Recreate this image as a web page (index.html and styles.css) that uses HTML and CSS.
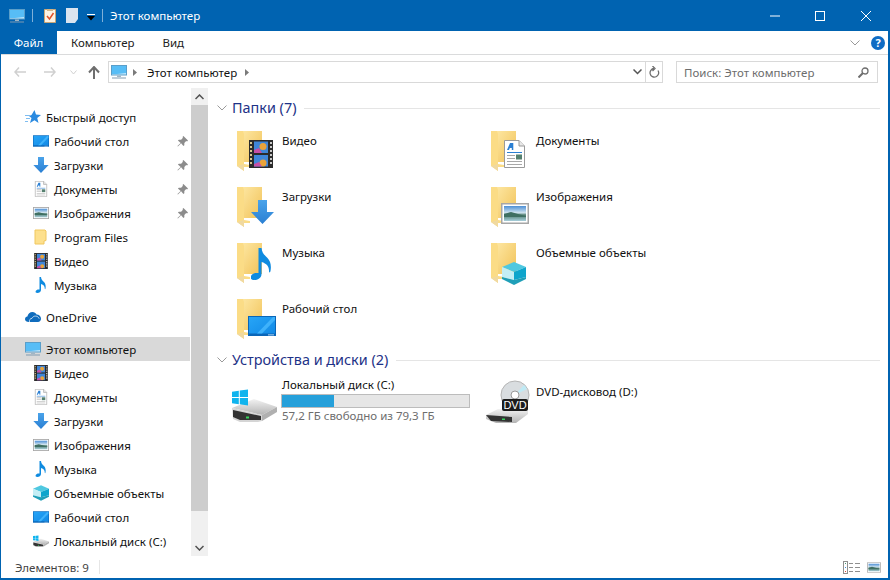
FILE: index.html
```html
<!DOCTYPE html>
<html lang="en">

<head>
  <meta charset="UTF-8">
  <title>Этот компьютер</title>
  <link rel="stylesheet" href="styles.css">
</head>

<body>
  <!-- Shared icons -->
  <svg class="defs" width="0" height="0">
    <defs>
      <linearGradient id="g-folder" x1="0" y1="0" x2="1" y2="1">
        <stop offset="0" stop-color="#fde6a0" />
        <stop offset="1" stop-color="#f1c258" />
      </linearGradient>
      <linearGradient id="g-screen" x1="0" y1="0" x2="1" y2="1">
        <stop offset="0" stop-color="#27a5f7" />
        <stop offset="1" stop-color="#128ae6" />
      </linearGradient>
      <linearGradient id="g-arrow" x1="0" y1="0" x2="0" y2="1">
        <stop offset="0" stop-color="#4aa3ea" />
        <stop offset="1" stop-color="#2a7fd3" />
      </linearGradient>
      <linearGradient id="g-photo" x1="0" y1="0" x2="0" y2="1">
        <stop offset="0" stop-color="#4d8fd6" />
        <stop offset="0.45" stop-color="#cfe3ee" />
        <stop offset="0.6" stop-color="#4f7d6e" />
        <stop offset="1" stop-color="#a8cfdc" />
      </linearGradient>
      <linearGradient id="g-disk" x1="0" y1="0" x2="0" y2="1">
        <stop offset="0" stop-color="#f2f2f2" />
        <stop offset="1" stop-color="#b4b4b4" />
      </linearGradient>

      <symbol id="folder" viewBox="0 0 48 48">
        <path d="M13 5h19v31H13z" fill="url(#g-folder)" />
        <path d="M7 5h6l1 3v30l6 1v2H14v4L7 40z" fill="#fbdc86" />
        <path d="M7 40l7 5v-7z" fill="#f0d9a0" />
      </symbol>

      <symbol id="computer" viewBox="0 0 16 14">
        <rect x="0.5" y="0.5" width="15" height="9.5" fill="#bfe6fb" stroke="#5a9ec9" />
        <path d="M1 1h14v7L6 9H1z" fill="#57bdf6" />
        <path d="M6 10.5h4v1.5H6z" fill="#9fb6c6" />
        <path d="M1 12.5h14v1H1z" fill="#7f9bb0" />
      </symbol>

      <symbol id="desktop" viewBox="0 0 28 20">
        <rect width="28" height="20" fill="#0a66b8" />
        <rect x="1" y="1" width="26" height="16.500" fill="url(#g-screen)" />
        <path d="M9 17.500L25 1h2v3L14 17.500z" fill="#3fb2fb" />
        <path d="M20 18.500h6v0.800h-6z" fill="#d6efff" />
      </symbol>

      <symbol id="arrow" viewBox="0 0 23 24">
        <path d="M7 0h9v12h7L11.500 24 0 12h7z" fill="url(#g-arrow)" />
      </symbol>

      <symbol id="doc" viewBox="0 0 21 28">
        <path d="M0.500 0.500H15L20.500 6v21.500H0.500z" fill="#fff" stroke="#9a9a9a" />
        <path d="M15 0.500V6h5.500" fill="#e8e8e8" stroke="#9a9a9a" />
        <path d="M6 3l-3 7h2l.8-2h2v2h1.500V3z" fill="#2a7fd3" />
        <path d="M3 12h15v1H3z" fill="#2a7fd3" />
        <path d="M3 15h8v1H3zM3 18h8v1H3zM3 21h15v1H3zM3 24h15v1H3z" fill="#a8a8a8" />
        <rect x="12" y="14.500" width="6" height="5" fill="#55806f" />
      </symbol>

      <symbol id="picture" viewBox="0 0 28 21">
        <rect width="28" height="21" fill="#a6a6a6" />
        <rect x="1.500" y="1.500" width="25" height="18" fill="#fff" />
        <rect x="3" y="3" width="22" height="15" fill="url(#g-photo)" />
        <path d="M3 11l7-2 7 2 8 2v1H3z" fill="#3f6f62" />
      </symbol>

      <symbol id="film" viewBox="0 0 24 28">
        <rect width="24" height="28" fill="#2b2b2b" />
        <path d="M1 2h2v2H1zM1 6h2v2H1zM1 10h2v2H1zM1 14h2v2H1zM1 18h2v2H1zM1 22h2v2H1z" fill="#d8c890" />
        <path d="M21 2h2v2h-2zM21 6h2v2h-2zM21 10h2v2h-2zM21 14h2v2h-2zM21 18h2v2h-2zM21 22h2v2h-2z" fill="#c9c9c9" />
        <rect x="5" y="1.500" width="14" height="11.500" fill="#3f86d8" />
        <rect x="5" y="15" width="14" height="11.500" fill="#3f86d8" />
        <circle cx="14" cy="6.500" r="3.500" fill="#e9a33a" />
        <circle cx="14" cy="23" r="3.500" fill="#e9a33a" />
        <path d="M5 10l5-2 3 5H5zM5 24l5-2 3 4.500H5z" fill="#c64fa5" />
      </symbol>

      <symbol id="music" viewBox="0 0 21 32">
        <path d="M7.500 0h3c.5 5 3 7 6 10 3 3 4 8 3 13-.3 1.500-1.200 2-1.500.5.300-4.500-2-8-7.500-9.500v12c0 4-4 6-7 6-3.500 0-4.500-2-3.500-4 1-2.500 4-3.500 7.500-3z" fill="#0f8be0" />
      </symbol>

      <symbol id="cube" viewBox="0 0 24 23">
        <path d="M12 0l12 5-12 5L0 5z" fill="#4fc8e0" />
        <path d="M0 5l12 5v8L0 15z" fill="#c3eef5" />
        <path d="M24 5l-12 5v8l12-3z" fill="#0ea5cc" />
        <path d="M0 15l12 3 12-3v2l-12 6L0 17z" fill="#1f9fb8" />
      </symbol>

      <symbol id="pin" viewBox="0 0 12 12">
        <path d="M7 0l5 5-1 1-1-.5L8 7.500 8 10 7 11 4.500 8 1 11.500.5 11 4 7.500 1 5l1-1h2.500l2-2L6 1z" fill="#8c8c8c" />
      </symbol>

      <symbol id="star" viewBox="0 0 16 16">
        <path d="M9.500 1l1.500 4.500L16 6l-3.800 3 1.300 5-4-2.800L5 14l1.500-5L4 7l2.500-1z" fill="#2a8ae0" />
        <path d="M0 6h5v1H0zM1 9h4v1H1zM0 12h3v1H0z" fill="#7fbdf0" />
      </symbol>

      <symbol id="cloud" viewBox="0 0 16 11">
        <path d="M4 10.500C1.500 10.500 0 9.300 0 7.700 0 6.300 1 5.300 2.400 5.100 2.800 2.500 5 .5 7.500.5c1.800 0 3.300 1 4.100 2.500 2.500 0 4.400 1.900 4.400 4.200 0 1.900-1.300 3.300-3 3.300z" fill="#0f6cbd" />
        <path d="M4.500 10.500c-.5-2 .7-3.500 2.500-3.700.6-1.300 2-2.300 3.500-2.200 1.800 0 3.200 1 3.700 2.600" fill="none" stroke="#fff" stroke-width="0.700" />
      </symbol>

      <symbol id="windows" viewBox="0 0 16 16">
        <path d="M0 2.200l6.800-1v6.300H0zM7.800 1l8.200-1v7.500H7.800zM0 8.500h6.800v6.300l-6.800-1zM7.800 8.500H16V16l-8.200-1.200z" fill="#10b4ee" />
      </symbol>

      <symbol id="hdd" viewBox="0 0 45 33">
        <path d="M0 19L22 10l23 8-15 8z" fill="url(#g-disk)" />
        <path d="M30 26l15-8v5L30 32z" fill="#b0b0b0" />
        <path d="M0 19l30 7v6l-4 1H8l-7-3z" fill="#d5d5d5" />
        <path d="M1 21l28 6v4H8L1 28z" fill="#333" />
        <rect x="14" y="27.500" width="3" height="2" fill="#37d45c" />
        <use href="#windows" x="0" y="0" width="16" height="17" />
      </symbol>
    </defs>
  </svg>

  <div class="window">
    <div class="titlebar">
      <svg class="qa-icon"><use href="#computer" /></svg>
      <span class="qa-sep"></span>
      <svg class="qa-doc" viewBox="0 0 12 15">
        <path d="M0.500 1.500h11v13h-11z" fill="#fbf3e4" stroke="#caa675" />
        <path d="M3 1h6v2H3z" fill="#d2b58c" />
        <path d="M3 8l2.500 3L9.500 5" fill="none" stroke="#e0512a" stroke-width="1.500" />
      </svg>
      <svg class="qa-page" viewBox="0 0 12 15">
        <path d="M0 0h12v11l-3 4H0z" fill="#dbe4ef" />
      </svg>
      <svg class="qa-drop" viewBox="0 0 8 8">
        <path d="M0 1h8v1H0z" fill="#fff" />
        <path d="M0 3h8L4 7.500z" fill="#000" />
      </svg>
      <span class="qa-sep"></span>
      <span class="title-text">Этот компьютер</span>
      <div class="win-buttons">
        <svg width="10" height="10" viewBox="0 0 10 10"><path d="M0 5h10" stroke="#fff" /></svg>
        <svg width="10" height="10" viewBox="0 0 10 10"><rect x="0.500" y="0.500" width="9" height="9" fill="none" stroke="#fff" /></svg>
        <svg width="10" height="10" viewBox="0 0 10 10"><path d="M0 0l10 10M10 0L0 10" stroke="#fff" /></svg>
      </div>
    </div>

    <div class="ribbon">
      <div class="tab tab-file">Файл</div>
      <div class="tab tab-comp">Компьютер</div>
      <div class="tab tab-view">Вид</div>
      <svg class="ribbon-chev" width="10" height="6" viewBox="0 0 10 6"><path d="M0.500 0.500L5 5l4.500-4.500" fill="none" stroke="#9a9a9a" /></svg>
      <div class="help">?</div>
    </div>

    <div class="addressbar">
      <svg class="nav-btn back" width="12" height="10" viewBox="0 0 12 10"><path d="M5 0.500L1 5l4 4.500M1 5h11" fill="none" stroke="#d0d0d0" stroke-width="1.500" /></svg>
      <svg class="nav-btn forward" width="12" height="10" viewBox="0 0 12 10"><path d="M7 0.500L11 5 7 9.500M11 5H0" fill="none" stroke="#d0d0d0" stroke-width="1.500" /></svg>
      <svg class="nav-btn recent" width="7" height="5" viewBox="0 0 7 5"><path d="M0.500 0.500L3.500 4l3-3.500" fill="none" stroke="#d0d0d0" /></svg>
      <svg class="nav-btn up" width="12" height="13" viewBox="0 0 12 13"><path d="M6 13V1.500M1 6.500L6 1l5 5.500" fill="none" stroke="#6e6e6e" stroke-width="2" /></svg>
      <div class="address">
        <svg class="addr-icon"><use href="#computer" /></svg>
        <svg class="crumb first" width="4" height="7" viewBox="0 0 4 7"><path d="M0 0l4 3.500L0 7z" fill="#7a7a7a" /></svg>
        <span class="addr-text">Этот компьютер</span>
        <svg class="crumb" width="4" height="7" viewBox="0 0 4 7"><path d="M0 0l4 3.500L0 7z" fill="#7a7a7a" /></svg>
        <svg class="addr-drop" width="9" height="6" viewBox="0 0 9 6"><path d="M0.500 0.500L4.500 4.500l4-4" fill="none" stroke="#555" stroke-width="1.500" /></svg>
        <span class="addr-refresh">
          <svg width="11" height="12" viewBox="0 0 11 12"><path d="M5 2.500a4.300 4.300 0 1 0 4 2M3.500 0L6 2.500 3.500 5" fill="none" stroke="#6e6e6e" stroke-width="1.300" /></svg>
        </span>
      </div>
      <div class="search">
        <span>Поиск: Этот компьютер</span>
        <svg width="11" height="11" viewBox="0 0 11 11"><circle cx="7" cy="4" r="3" fill="none" stroke="#6e6e6e" stroke-width="1.300" /><path d="M5 6l-4.500 4.500" stroke="#6e6e6e" stroke-width="2" /></svg>
      </div>
    </div>

    <div class="main">
      <div class="sidebar">
        <div class="tree-row top"><svg class="ico"><use href="#star" /></svg>Быстрый доступ</div>
        <div class="tree-row"><svg class="ico"><use href="#desktop" /></svg>Рабочий стол<svg class="pin"><use href="#pin" /></svg></div>
        <div class="tree-row"><svg class="ico"><use href="#arrow" /></svg>Загрузки<svg class="pin"><use href="#pin" /></svg></div>
        <div class="tree-row"><svg class="ico"><use href="#doc" /></svg>Документы<svg class="pin"><use href="#pin" /></svg></div>
        <div class="tree-row"><svg class="ico"><use href="#picture" /></svg>Изображения<svg class="pin"><use href="#pin" /></svg></div>
        <div class="tree-row"><svg class="ico" viewBox="0 0 16 16"><path d="M2 1h10l1 1v9.500l-2 .5v3H2z" fill="#fde08d" stroke="#f0c75e" /></svg>Program Files</div>
        <div class="tree-row"><svg class="ico"><use href="#film" /></svg>Видео</div>
        <div class="tree-row"><svg class="ico"><use href="#music" /></svg>Музыка</div>
        <div class="tree-row top gap"><svg class="ico"><use href="#cloud" /></svg>OneDrive</div>
        <div class="tree-row top gap selected"><svg class="ico"><use href="#computer" /></svg>Этот компьютер</div>
        <div class="tree-row"><svg class="ico"><use href="#film" /></svg>Видео</div>
        <div class="tree-row"><svg class="ico"><use href="#doc" /></svg>Документы</div>
        <div class="tree-row"><svg class="ico"><use href="#arrow" /></svg>Загрузки</div>
        <div class="tree-row"><svg class="ico"><use href="#picture" /></svg>Изображения</div>
        <div class="tree-row"><svg class="ico"><use href="#music" /></svg>Музыка</div>
        <div class="tree-row"><svg class="ico"><use href="#cube" /></svg>Объемные объекты</div>
        <div class="tree-row"><svg class="ico"><use href="#desktop" /></svg>Рабочий стол</div>
        <div class="tree-row"><svg class="ico"><use href="#hdd" /></svg>Локальный диск (C:)</div>
      </div>

      <div class="scrollbar">
        <div class="scroll-btn"><svg width="9" height="6" viewBox="0 0 9 6"><path d="M0.500 5L4.500 1l4 4" fill="none" stroke="#505050" stroke-width="1.500" /></svg></div>
        <div class="scroll-thumb"></div>
        <div class="scroll-track"></div>
        <div class="scroll-btn"><svg width="9" height="6" viewBox="0 0 9 6"><path d="M0.500 1L4.500 5l4-4" fill="none" stroke="#505050" stroke-width="1.500" /></svg></div>
      </div>

      <div class="content">
        <div class="group-head">
          <svg width="10" height="6" viewBox="0 0 10 6"><path d="M0.500 0.500L5 5l4.500-4.500" fill="none" stroke="#9a9a9a" /></svg>
          <span>Папки (7)</span>
          <div class="group-line"></div>
        </div>
        <div class="tiles">
          <div class="tile">
            <svg class="tile-icon" viewBox="0 0 48 48"><use href="#folder" /><use href="#film" x="19" y="14" width="24" height="28" /></svg>
            <div class="tile-name">Видео</div>
          </div>
          <div class="tile">
            <svg class="tile-icon" viewBox="0 0 48 48"><use href="#folder" /><use href="#doc" x="20" y="14" width="21" height="28" /></svg>
            <div class="tile-name">Документы</div>
          </div>
          <div class="tile">
            <svg class="tile-icon" viewBox="0 0 48 48"><use href="#folder" /><use href="#arrow" x="21" y="18" width="23" height="24" /></svg>
            <div class="tile-name">Загрузки</div>
          </div>
          <div class="tile">
            <svg class="tile-icon" viewBox="0 0 48 48"><use href="#folder" /><use href="#picture" x="17" y="21" width="28" height="21" /></svg>
            <div class="tile-name">Изображения</div>
          </div>
          <div class="tile">
            <svg class="tile-icon" viewBox="0 0 48 48"><use href="#folder" /><use href="#music" x="21" y="10" width="21" height="32" /></svg>
            <div class="tile-name">Музыка</div>
          </div>
          <div class="tile">
            <svg class="tile-icon" viewBox="0 0 48 48"><use href="#folder" /><use href="#cube" x="18" y="24" width="24" height="23" /></svg>
            <div class="tile-name">Объемные объекты</div>
          </div>
          <div class="tile">
            <svg class="tile-icon" viewBox="0 0 48 48"><use href="#folder" /><use href="#desktop" x="18" y="22" width="28" height="20" /></svg>
            <div class="tile-name">Рабочий стол</div>
          </div>
        </div>

        <div class="group-head second">
          <svg width="10" height="6" viewBox="0 0 10 6"><path d="M0.500 0.500L5 5l4.500-4.500" fill="none" stroke="#9a9a9a" /></svg>
          <span>Устройства и диски (2)</span>
          <div class="group-line"></div>
        </div>
        <div class="tiles drives">
          <div class="tile">
            <svg class="tile-icon" viewBox="0 0 48 48"><use href="#hdd" x="2" y="12" width="45" height="33" /></svg>
            <div class="drive-info">
              <div class="drive-name">Локальный диск (C:)</div>
              <div class="drive-bar"><div class="drive-used" style="width: 28%"></div></div>
              <div class="drive-free">57,2 ГБ свободно из 79,3 ГБ</div>
            </div>
          </div>
          <div class="tile">
            <svg class="tile-icon" viewBox="0 0 48 48">
              <circle cx="31" cy="18" r="14" fill="#d9dde0" stroke="#b5b5b5" />
              <path d="M31 18L40 8a14 14 0 0 1 3 4z" fill="#bfeaf5" />
              <circle cx="31" cy="18" r="4" fill="#fff" stroke="#9a9a9a" />
              <path d="M2 38l12-6h20l10 2v3L32 46H12L2 42z" fill="url(#g-disk)" />
              <path d="M2 38l26 2v5L7 44z" fill="#333" />
              <rect x="18" y="41.500" width="3" height="1.500" fill="#37d45c" />
              <rect x="18" y="22" width="26" height="12" rx="2" fill="#1c1c1c" />
              <text class="dvd-label" x="31" y="32" text-anchor="middle">DVD</text>
            </svg>
            <div class="tile-name">DVD-дисковод (D:)</div>
          </div>
        </div>
      </div>
    </div>

    <div class="statusbar">
      <span class="status-text">Элементов: 9</span>
      <span class="status-sep"></span>
      <svg class="status-details" width="17" height="13" viewBox="0 0 17 13">
        <rect x="0.500" y="0.500" width="4" height="12" fill="#fff" stroke="#8f8f8f" />
        <path d="M2 2h1v1H2z" fill="#4a9a7a" /><path d="M2 6h1v1H2z" fill="#3a8fe0" /><path d="M2 10h1v1H2z" fill="#e04a3a" />
        <path d="M6 2.500h4M12 2.500h5M6 6.500h4M12 6.500h5M6 10.500h4M12 10.500h5" stroke="#8f8f8f" />
      </svg>
      <svg class="status-tiles" width="14" height="11" viewBox="0 0 28 21"><use href="#picture" /></svg>
    </div>
  </div>
</body>

</html>
```

FILE: styles.css
```css
html,
body {
  margin: 0;
  height: 100%;
  overflow: hidden;
}

body {
  font-family: "Noto Sans", "Open Sans", sans-serif;
  font-size: 11.5px;
  color: #111;
  background: #fff;
}

.defs {
  position: absolute;
}

.window {
  display: flex;
  flex-direction: column;
  box-sizing: border-box;
  height: 580px;
  border: solid #0063b1;
  border-width: 0 2px 2px 1px;
}

/* Title bar */
.titlebar {
  display: flex;
  align-items: center;
  height: 31px;
  margin-left: -1px;
  margin-right: -2px;
  padding-left: 9px;
  background: #0063b1;
  color: #fff;
}

.qa-icon {
  width: 16px;
  height: 14px;
}

.qa-sep {
  width: 1px;
  height: 13px;
  margin: 0 11px 0 7px;
  background: #7fb0d8;
}

.qa-doc,
.qa-page {
  width: 12px;
  height: 15px;
  margin-right: 10px;
}

.qa-page {
  margin-right: 9px;
}

.qa-drop {
  width: 8px;
  height: 8px;
  margin-top: 3px;
}

.qa-drop + .qa-sep {
  margin-left: 7px;
  margin-right: 7px;
}

.win-buttons {
  display: flex;
  gap: 35px;
  margin-left: auto;
  padding-right: 19px;
}

.win-buttons svg:last-child {
  margin-left: 1px;
}

/* Ribbon tabs */
.ribbon {
  display: flex;
  align-items: center;
  flex-shrink: 0;
  height: 23px;
  border-bottom: 1px solid #dadbdc;
}

.tab {
  line-height: 23px;
  height: 23px;
  color: #222;
}

.tab-file {
  width: 57px;
  margin-left: -1px;
  text-align: center;
  color: #fff;
  background: #0063b1;
}

.tab-comp {
  margin-left: 14px;
}

.tab-view {
  margin-left: 28px;
}

.ribbon-chev {
  margin-left: auto;
  margin-right: 11px;
}

.help {
  width: 14px;
  height: 14px;
  margin-right: 3px;
  border-radius: 50%;
  background: #0f6cc4;
  color: #fff;
  font-size: 11px;
  font-weight: 700;
  line-height: 14px;
  text-align: center;
}

/* Address row */
.addressbar {
  display: flex;
  align-items: center;
  flex-shrink: 0;
  height: 33px;
  padding-top: 1px;
  box-sizing: border-box;
}

.nav-btn {
  flex-shrink: 0;
}

.back {
  margin-left: 13px;
}

.forward {
  margin-left: 18px;
}

.recent {
  margin-left: 14px;
}

.up {
  margin-left: 11px;
}

.address,
.search {
  display: flex;
  align-items: center;
  box-sizing: border-box;
  height: 22px;
  border: 1px solid #d9d9d9;
}

.address {
  width: 555px;
  margin-left: 8px;
}

.addr-icon {
  width: 16px;
  height: 14px;
  margin-left: 2px;
}

.crumb.first {
  margin-left: 6px;
}

.addr-text {
  margin: 0 8px 0 10px;
}

.addr-drop {
  margin-left: auto;
  margin-right: 3px;
}

.addr-refresh {
  display: flex;
  align-items: center;
  justify-content: center;
  width: 16px;
  height: 20px;
  border-left: 1px solid #d9d9d9;
}

.search {
  justify-content: space-between;
  width: 202px;
  margin-left: 13px;
  padding: 0 8px 0 7px;
  color: #6d6d6d;
}

/* Navigation pane */
.main {
  display: flex;
  flex: 1;
  min-height: 0;
}

.sidebar {
  width: 189px;
  flex-shrink: 0;
  padding-top: 17px;
  overflow: hidden;
}

.tree-row {
  display: flex;
  align-items: center;
  height: 24px;
  padding-left: 32px;
}

.tree-row.top {
  padding-left: 24px;
}

.tree-row.gap {
  margin-top: 8px;
}

.tree-row.selected {
  margin-top: 8px;
  background: #d9d9d9;
}

.ico {
  width: 16px;
  height: 16px;
  margin-right: 5px;
  flex-shrink: 0;
}

.pin {
  width: 11px;
  height: 11px;
  margin-left: auto;
  margin-right: 2px;
}

.scrollbar {
  display: flex;
  flex-direction: column;
  width: 17px;
  margin-left: 1px;
  flex-shrink: 0;
}

.scroll-btn {
  display: flex;
  align-items: center;
  justify-content: center;
  height: 17px;
  background: #f0f0f0;
}

.scroll-thumb {
  height: 406px;
  background: #cdcdcd;
}

.scroll-track {
  flex: 1;
  background: #f0f0f0;
}

/* File area */
.content {
  flex: 1;
  padding: 10px 8px 0 9px;
  overflow: hidden;
}

.group-head {
  display: flex;
  align-items: center;
  height: 20px;
  color: #1e3287;
  font-size: 14.4px;
}

.group-head.second {
  margin-top: 4px;
}

.group-head span {
  margin-top: -2px;
  margin-left: 5px;
}

.group-line {
  flex: 1;
  height: 1px;
  margin-left: 8px;
  background: #e5e5e5;
}

.tiles {
  display: grid;
  grid-template-columns: 254px 254px;
  grid-auto-rows: 56px;
  padding-top: 4px;
  padding-left: 13px;
}

.tile {
  display: flex;
  gap: 4px;
}

.tile-icon {
  width: 48px;
  height: 48px;
  margin-top: 4px;
  flex-shrink: 0;
}

.tile-name {
  line-height: 16px;
  margin-top: 11px;
}

.drives {
  padding-top: 0;
}

.drives .tile {
  padding-top: 7px;
}

.drives .tile-icon {
  margin-top: 0;
}

.drives .tile-name {
  margin-top: 7px;
}

.drive-info {
  line-height: 16px;
}

.drive-bar {
  box-sizing: border-box;
  width: 189px;
  height: 14px;
  margin: 1px 0 0 -1px;
  border: 1px solid #bcbcbc;
  background: #e6e6e6;
}

.drive-used {
  height: 100%;
  background: #26a0da;
}

.drive-free {
  color: #6d6d6d;
}

.dvd-label {
  font-family: "Liberation Sans", sans-serif;
  font-size: 11px;
  fill: #fff;
}

/* Status bar */
.statusbar {
  display: flex;
  align-items: center;
  flex-shrink: 0;
  height: 22px;
  color: #444;
}

.status-text {
  margin-left: 14px;
}

.status-sep {
  width: 1px;
  height: 14px;
  margin-left: 10px;
  background: #e6e6e6;
}

.status-details {
  margin-left: auto;
}

.status-tiles {
  margin-left: 7px;
  margin-right: 7px;
}
```
